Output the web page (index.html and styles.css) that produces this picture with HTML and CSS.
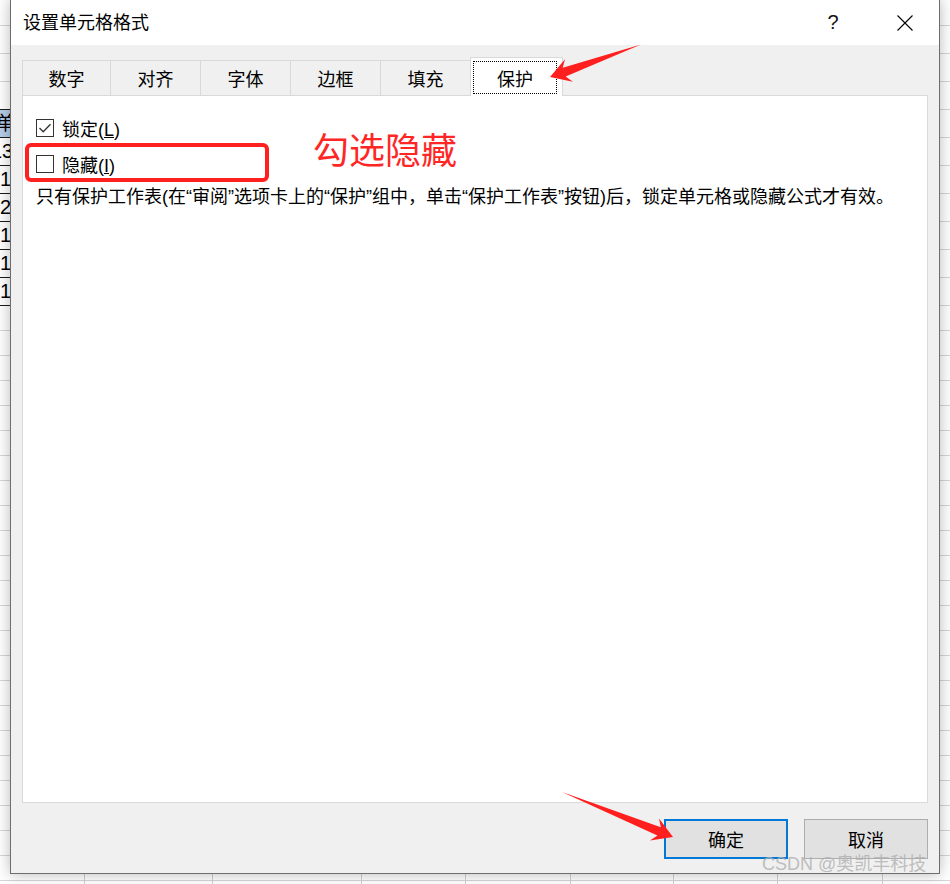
FILE: index.html
```html
<!DOCTYPE html>
<html lang="zh-CN">
<head>
<meta charset="utf-8">
<title>设置单元格格式</title>
<link rel="stylesheet" href="styles.css">
</head>
<body>
<div class="sheet">
  <div class="col w1 col1">
    <div class="xcell first hl"><span class="t-dan">单</span></div>
    <div class="xcell"><span class="t-13">13</span></div>
    <div class="xcell"><span>1</span></div>
    <div class="xcell"><span>2</span></div>
    <div class="xcell"><span>1</span></div>
    <div class="xcell"><span>1</span></div>
    <div class="xcell"><span>1</span></div>
  </div>
  <div class="col w2"></div>
  <div class="col w3"></div>
  <div class="col w4"></div>
  <div class="col w5"></div>
  <div class="col w6"></div>
  <div class="col w7"></div>
  <div class="col w8"></div>
  <div class="col last"></div>
</div>

<div class="dialog">
  <div class="titlebar">
    <span class="title">设置单元格格式</span>
    <div class="tb-btns">
      <span class="help">?</span>
      <span class="close">
        <svg width="16" height="16" viewBox="0 0 16 16"><path d="M0.5 0.5 L15.5 15.5 M15.5 0.5 L0.5 15.5" stroke="#000" stroke-width="1.1" fill="none"/></svg>
      </span>
    </div>
  </div>
  <div class="dlg-body">
    <div class="tabs">
      <div class="tab first">数字</div>
      <div class="tab">对齐</div>
      <div class="tab">字体</div>
      <div class="tab">边框</div>
      <div class="tab">填充</div>
      <div class="tab active"><div class="focus">保护</div></div>
    </div>
    <div class="panel">
      <div class="check-row">
        <span class="cbox"><svg width="16" height="16" viewBox="0 0 16 16"><path d="M2.5 8 L6.2 11.8 L13.5 4.2" stroke="#333" stroke-width="1.3" fill="none"/></svg></span>
        <span class="lbl">锁定(<u>L</u>)</span>
      </div>
      <div class="check-row">
        <span class="cbox"></span>
        <span class="lbl">隐藏(<u>I</u>)</span>
      </div>
      <div class="desc">只有保护工作表(在“审阅”选项卡上的“保护”组中，单击“保护工作表”按钮)后，锁定单元格或隐藏公式才有效。</div>
    </div>
    <div class="actions">
      <div class="btn primary">确定</div>
      <div class="btn">取消</div>
    </div>
  </div>
</div>

<div class="anno-box"></div>
<div class="anno-text">勾选隐藏</div>
<svg class="arrows" width="950" height="884" viewBox="0 0 950 884">
  <polygon points="641,44.5 565.7,76.4 572.8,81.8 550,77 565.0,59.2 562.7,67.8" fill="#ff1f1f"/>
  <polygon points="562,792 660.8,827.2 659.0,818.4 673,837 650.0,840.6 657.4,835.6" fill="#ff1f1f"/>
</svg>
<div class="watermark">CSDN @奥凯丰科技</div>
</body>
</html>
```
FILE: styles.css
```css
* { box-sizing: border-box; }
html, body { margin: 0; padding: 0; }
body {
  width: 950px;
  height: 884px;
  overflow: hidden;
  position: relative;
  background: #fff;
  font-family: "Liberation Sans", "Noto Sans CJK SC", sans-serif;
  color: #000;
}

/* background spreadsheet */
.sheet {
  display: flex;
  height: 884px;
  background-image:
    repeating-linear-gradient(to bottom, transparent 0 27px, #d6d6d6 27px 28px),
    repeating-linear-gradient(to bottom, transparent 0 24px, #d6d6d6 24px 25px);
  background-size: 100% 308px, 100% 578px;
  background-position: 0 -2px, 0 306px;
  background-repeat: no-repeat, no-repeat;
}
.col { flex: none; height: 100%; border-right: 1px solid #d0d0d0; }
.w1 { width: 85px; }
.w2 { width: 128px; }
.w3 { width: 149px; }
.w4 { width: 104px; }
.w5 { width: 105px; }
.w6 { width: 103px; }
.w7 { width: 104px; }
.w8 { width: 105px; }
.col.last { flex: 1; border-right: 0; }
.col1 { padding-top: 109px; display: flex; flex-direction: column; }
.xcell {
  height: 28px;
  border-bottom: 1px solid #1c1c1c;
  font-size: 20px;
  line-height: 27px;
  white-space: nowrap;
  overflow: hidden;
}
.xcell.first { height: 29px; border-top: 1px solid #1c1c1c; }
.xcell.hl { background: #b7cde9; }
.t-dan { display: inline-block; margin-left: -4px; font-size: 19px; }
.t-13 { display: inline-block; margin-left: -9px; }

/* dialog window */
.dialog {
  position: absolute;
  z-index: 1;
  left: 10px;
  top: -1px;
  width: 930px;
  height: 875px;
  border: 1px solid #6d6d6d;
  background: #f0f0f0;
  box-shadow: 0 0 14px rgba(0, 0, 0, 0.28);
  display: flex;
  flex-direction: column;
}
.titlebar {
  flex: none;
  height: 45px;
  background: #fff;
  display: flex;
  align-items: center;
}
.title { padding-left: 12px; font-size: 18px; margin-bottom: 3px; }
.tb-btns { margin-left: auto; display: flex; height: 100%; }
.help {
  width: 76px;
  display: flex;
  align-items: center;
  justify-content: center;
  font-size: 20px;
  color: #111;
}
.close {
  width: 68px;
  display: flex;
  align-items: center;
  justify-content: center;
}

.dlg-body {
  flex: 1;
  padding: 12px 11px 0;
  display: flex;
  flex-direction: column;
}
.tabs { display: flex; align-items: flex-end; height: 38px; flex: none; }
.tab {
  width: 90px;
  height: 35px;
  border-top: 1px solid #d9d9d9;
  border-left: 1px solid #d9d9d9;
  display: flex;
  align-items: center;
  justify-content: center;
  font-size: 18px;
  padding-bottom: 1px;
}
.tab.first { width: 88px; }
.tab.active {
  width: 93px;
  height: 39px;
  margin-bottom: -1px;
  background: #fff;
  border: 1px solid #d9d9d9;
  border-bottom: 0;
  padding: 3px 5px 2px 2px;
  position: relative;
  z-index: 1;
  align-items: stretch;
}
.focus {
  flex: 1;
  border: 1px dotted #000;
  display: flex;
  align-items: center;
  justify-content: center;
}

.panel {
  flex: none;
  height: 708px;
  background: #fff;
  border: 1px solid #d9d9d9;
  padding: 14px 0 0 13px;
}
.check-row {
  height: 36px;
  display: flex;
  align-items: center;
  gap: 8px;
  font-size: 18px;
}
.cbox {
  width: 18px;
  height: 18px;
  border: 1px solid #333;
  background: #fff;
  display: flex;
  align-items: center;
  justify-content: center;
}
.desc { font-size: 18px; line-height: 30px; white-space: nowrap; }

.actions {
  display: flex;
  justify-content: flex-end;
  gap: 16px;
  margin-top: 16px;
}
.btn {
  width: 124px;
  height: 40px;
  background: #e1e1e1;
  border: 1px solid #adadad;
  display: flex;
  align-items: center;
  justify-content: center;
  font-size: 18px;
}
.btn.primary { border: 2px solid #0078d7; }

/* annotations (drawn over the screenshot) */
.anno-box {
  position: absolute;
  z-index: 5;
  left: 25px;
  top: 143px;
  width: 244px;
  height: 39px;
  border: 4px solid #ff2020;
  border-radius: 6px;
}
.anno-text {
  position: absolute;
  z-index: 5;
  left: 313px;
  top: 128px;
  font-family: "Noto Sans CJK SC", sans-serif;
  font-size: 36px;
  line-height: 40px;
  color: #ff2626;
}
.arrows { position: absolute; z-index: 5; left: 0; top: 0; pointer-events: none; }
.watermark {
  position: absolute;
  z-index: 6;
  left: 762px;
  top: 852px;
  font-size: 18px;
  line-height: 24px;
  color: rgba(175, 175, 175, 0.8);
  white-space: nowrap;
}
```
